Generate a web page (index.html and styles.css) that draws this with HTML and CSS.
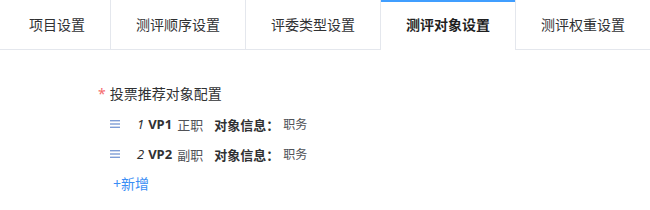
FILE: index.html
```html
<!DOCTYPE html>
<html lang="zh-CN">
<head>
    <meta charset="UTF-8">
    <title>测评对象设置</title>
    <link rel="stylesheet" href="styles.css">
</head>
<body>
    <div class="tabs">
        <div class="tab tab-first">项目设置</div>
        <div class="tab">测评顺序设置</div>
        <div class="tab">评委类型设置</div>
        <div class="tab active">测评对象设置</div>
        <div class="tab">测评权重设置</div>
    </div>

    <div class="form">
        <div class="form-label"><span class="required">*</span>投票推荐对象配置</div>

        <div class="item">
            <svg class="drag" width="10" height="8" viewBox="0 0 10 8">
                <rect x="0" y="0" width="10" height="1.4" />
                <rect x="0" y="3.3" width="10" height="1.4" />
                <rect x="0" y="6.6" width="10" height="1.4" />
            </svg>
            <span class="idx">1</span>
            <span class="code">VP1</span>
            <span class="name">正职</span>
            <span class="info-label">对象信息：</span>
            <span class="info-val">职务</span>
        </div>

        <div class="item">
            <svg class="drag" width="10" height="8" viewBox="0 0 10 8">
                <rect x="0" y="0" width="10" height="1.4" />
                <rect x="0" y="3.3" width="10" height="1.4" />
                <rect x="0" y="6.6" width="10" height="1.4" />
            </svg>
            <span class="idx">2</span>
            <span class="code">VP2</span>
            <span class="name">副职</span>
            <span class="info-label">对象信息：</span>
            <span class="info-val">职务</span>
        </div>

        <a class="add-link" href="#">+新增</a>
    </div>
</body>
</html>
```

FILE: styles.css
```css
* {
    box-sizing: border-box;
    margin: 0;
    padding: 0;
}

body {
    font-family: "Noto Sans", "Noto Sans CJK SC", sans-serif;
    color: #303133;
    background: #fff;
    width: 650px;
    overflow: hidden;
}

/* tabs */
.tabs {
    display: flex;
    height: 50px;
    border-bottom: 1px solid #e4e7ed;
}

.tab {
    flex: none;
    height: 50px;
    line-height: 49px;
    padding: 0 25px;
    font-size: 14px;
    color: #303133;
    border-right: 1px solid #e4e7ed;
    white-space: nowrap;
}

.tab-first {
    padding-left: 29px;
}

.tab.active {
    background: #fff;
    font-weight: bold;
    color: #1f1f1f;
    box-shadow: inset 0 2px 0 #409eff;
}

/* form */
.form {
    padding: 29px 0 0 98px;
    font-size: 14px;
}

.form-label {
    height: 30px;
    line-height: 30px;
    color: #303133;
}

.required {
    color: #f56c6c;
    margin-right: 4px;
}

.item {
    display: flex;
    align-items: center;
    height: 30px;
    padding-left: 12px;
    font-size: 13px;
    color: #303133;
}

.drag {
    fill: #7f9ed6;
    margin-right: 17px;
}

.idx {
    font-style: italic;
    color: #303133;
    margin-right: 4px;
}

.code {
    font-weight: bold;
    margin-right: 5px;
}

.name {
    color: #505257;
    margin-right: 11px;
}

.info-label {
    font-weight: bold;
}

.info-val {
    font-size: 12px;
    color: #505257;
    margin-left: 4px;
}

.add-link {
    display: block;
    height: 30px;
    line-height: 30px;
    padding-left: 15px;
    color: #3a8ef5;
    text-decoration: none;
}
```
